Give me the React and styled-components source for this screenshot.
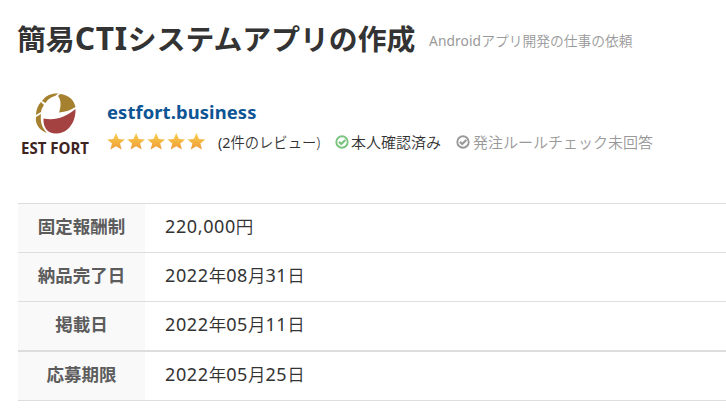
import React from "react";
import styled, { createGlobalStyle } from "styled-components";

const GlobalStyle = createGlobalStyle`
  body {
    margin: 0;
    background: #fff;
    color: #333;
    font-family: "Noto Sans", "Noto Sans CJK JP", sans-serif;
    overflow: hidden;
  }
`;

const Page = styled.main`
  padding: 19px 0 0 17px;
`;

const Heading = styled.header`
  display: flex;
  align-items: center;
  height: 40px;
  white-space: nowrap;
`;

const Title = styled.h1`
  margin: 0;
  width: 399px;
  font-size: 28.85px;
  line-height: 40px;
  font-weight: 700;
`;

const Category = styled.span`
  margin-left: 13px;
  padding-top: 4px;
  font-size: 13.75px;
  line-height: 20px;
  font-weight: 350;
  color: #999;
`;

// latin runs are set a little larger than the japanese text
const Latin = styled.span`
  font-size: ${({ $size }) => $size || 1}em;
  font-weight: ${({ $weight }) => $weight || "inherit"};
  line-height: 1;
  letter-spacing: ${({ $space }) => $space || 0}px;
`;

const Client = styled.section`
  display: flex;
  margin: 30px 0 0 1px;
  height: 80px;
`;

const Logo = styled.svg`
  width: 80px;
  height: 80px;
  flex: none;
`;

const Profile = styled.div`
  padding: 9px 0 0 9px;
`;

const Name = styled.a`
  display: block;
  color: #0d5594;
  font-size: 18.4px;
  line-height: 27px;
  font-weight: 700;
`;

const Meta = styled.div`
  display: flex;
  align-items: center;
  height: 34px;
  font-size: 15px;
  font-weight: 350;
  white-space: nowrap;
`;

const Stars = styled.svg`
  width: 100px;
  height: 20px;
`;

const Reviews = styled.span`
  width: 105px;
  margin-left: 11px;
  padding-bottom: 2px;
  font-size: 14.3px;
`;

const Status = styled.span`
  display: flex;
  align-items: center;
  gap: ${({ $gap }) => $gap}px;
  margin-left: ${({ $muted }) => ($muted ? 15 : 12)}px;
  padding-bottom: 1px;
  color: ${({ $muted }) => ($muted ? "#999" : "#333")};

  svg {
    width: 14px;
    height: 14px;
    margin-top: 1px;
    color: ${({ $muted }) => ($muted ? "#999" : "#7ac47f")};
  }
`;

const Table = styled.dl`
  margin: 34px 0 0 1px;
  border-bottom: 1px solid #ddd;
`;

const Row = styled.div`
  display: flex;
  height: 48px;
  border-top: ${({ $line }) => $line || 1}px solid #ddd;
  font-size: 17.5px;
  line-height: 44px;
`;

const Label = styled.dt`
  width: 127px;
  background: #f9f9f9;
  color: #5c5c5c;
  font-weight: 700;
  text-align: center;
`;

const Value = styled.dd`
  margin: 0 0 0 20px;
  font-weight: 350;
`;

const rows = [
  { label: "固定報酬制", value: "220,000円" },
  { label: "納品完了日", value: "2022年08月31日" },
  { label: "掲載日", value: "2022年05月11日" },
  { label: "応募期限", value: "2022年05月25日", line: 2 },
];

const CheckIcon = () => (
  <svg viewBox="0 0 14 14" fill="none" stroke="currentColor">
    <circle cx="7" cy="7" r="5.7" strokeWidth="1.9" />
    <path d="M4 6.8 6.3 9 10.3 5" strokeWidth="2.3" />
  </svg>
);

const Rating = () => (
  <Stars viewBox="0 0 100 20">
    <defs>
      <linearGradient id="gold" x1="0" y1="0" x2="0" y2="1">
        <stop offset="0" stopColor="#f8d04c" />
        <stop offset="1" stopColor="#f09a38" />
      </linearGradient>
    </defs>
    {[0, 1, 2, 3, 4].map((i) => (
      <path
        key={i}
        transform={`translate(${i * 20.1} 0)`}
        fill="url(#gold)"
        d="M9 1 11.6 6.9 17.8 7.4 13 11.5 14.6 17.6 9 14.3 3.4 17.6 5 11.5.2 7.4 6.4 6.9Z"
      />
    ))}
  </Stars>
);

const EstFort = () => (
  <Logo viewBox="0 0 80 80">
    <path fill="#a5812f" d="M42 5C51 6 56 11 57.5 18 53 21 48 23 41 23.5 43 18 43.5 11 40 7Z" />
    <path fill="#a5812f" d="M24 12C28 6 34 4 40.5 4.5L37 7C33 8 30 10 27.5 14Z" />
    <path fill="#a5812f" d="M23 13 26 16C24 19 23 21 23 23L18 26C18 21 20 16 23 13Z" />
    <path fill="#a5812f" d="M18 28 23 25C22 33 24 39 29 44 21 41 17 35 18 28Z" />
    <path fill="#a44242" d="M25.5 29.5C37 32 48 28 57.5 20 58 32 51 44 39 44.5 30 45 25 39 25.5 29.5Z" />
    <text x="3" y="65" textLength="68" lengthAdjust="spacingAndGlyphs" fill="#3e2521" fontFamily="Open Sans, sans-serif" fontSize="16.8" fontWeight="700">
      EST FORT
    </text>
  </Logo>
);

const App = () => (
  <>
    <GlobalStyle />
    <Page>
      <Heading>
        <Title>
          簡易<Latin $size={1.1} $space={0.7}>CTI</Latin>システムアプリの作成
        </Title>
        <Category>
          <Latin $weight={400} $space={0.1}>Android</Latin>アプリ開発の仕事の依頼
        </Category>
      </Heading>
      <Client>
        <EstFort />
        <Profile>
          <Name>
            <Latin $space={0.1}>estfort.business</Latin>
          </Name>
          <Meta>
            <Rating />
            <Reviews>
              <Latin $weight={400}>(2</Latin>件のレビュー)
            </Reviews>
            <Status $gap={2}>
              <CheckIcon />
              本人確認済み
            </Status>
            <Status $gap={3} $muted>
              <CheckIcon />
              発注ルールチェック未回答
            </Status>
          </Meta>
        </Profile>
      </Client>
      <Table>
        {rows.map(({ label, value, line }) => (
          <Row key={label} $line={line}>
            <Label>{label}</Label>
            <Value>
              {value.split(/([\d,]+)/).map((part, i) =>
                i % 2 ? (
                  <Latin key={i} $weight={400} $size={1.03} $space={0.6}>
                    {part}
                  </Latin>
                ) : (
                  part
                )
              )}
            </Value>
          </Row>
        ))}
      </Table>
    </Page>
  </>
);

export default App;
